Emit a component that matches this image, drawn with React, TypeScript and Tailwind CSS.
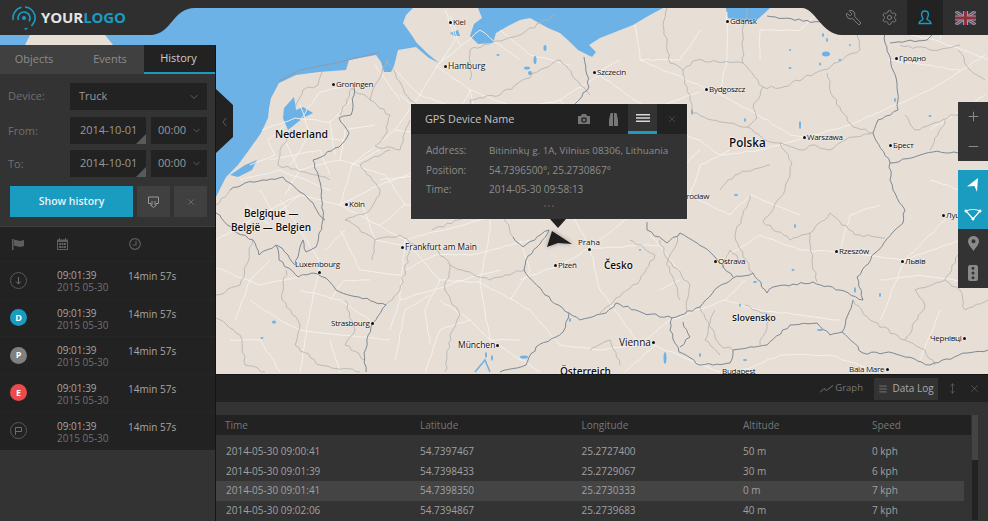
import React from "react";
import { ChevronDown, Wrench, Settings, X, Plus, Minus, Menu, MoveVertical } from "lucide-react";

const rnd = (n: number) => {
  const v = Math.sin(n * 12.9898 + 4.1) * 43758.5453;
  return v - Math.floor(v);
};

function wiggle(d: string, amp: number, step: number, seed: number) {
  const nums = d.match(/-?\d+(\.\d+)?|[ML]/g) ?? [];
  let out = "";
  let px = 0;
  let py = 0;
  let k = seed * 97;
  for (let i = 0; i < nums.length; ) {
    const cmd = nums[i];
    const x = Number(nums[i + 1]);
    const y = Number(nums[i + 2]);
    i += 3;
    if (cmd === "M") {
      out += `M${x} ${y}`;
    } else {
      const len = Math.hypot(x - px, y - py);
      const n = Math.max(1, Math.floor(len / step));
      for (let j = 1; j <= n; j++) {
        const t = j / n;
        const off = j === n ? 0 : (rnd(k++) - 0.5) * amp * 2;
        const nx = (-(y - py) / (len || 1)) * off;
        const ny = ((x - px) / (len || 1)) * off;
        out += `L${(px + (x - px) * t + nx).toFixed(1)} ${(py + (y - py) * t + ny).toFixed(1)}`;
      }
    }
    px = x;
    py = y;
  }
  return out;
}

const borders = [
  "M667 8 L664 30 L667 43 L670 63 L683 70 L690 100 L693 113 L720 122 L747 127 L765 140 L780 143 L792 163 L785 190",
  "M697 60 L683 70 M697 60 L743 63 L763 87 L780 88 L823 70 L860 50 L857 33",
  "M763 87 L753 107 L757 118 L747 127",
  "M827 73 L833 97 L853 127 L873 133",
  "M747 8 L743 35 L743 63",
  "M780 143 L800 150 L815 145 L830 150 L845 140 L873 133",
  "M785 190 L763 222 L790 240 L810 233 L830 213 L855 235 L885 238",
  "M810 233 L812 260 L817 282",
  "M750 195 L735 235 L743 257 L753 273",
  "M387 60 L375 85 L370 100 L352 88",
  "M322 72 L318 85 L303 90 L295 108",
  "M352 88 L340 115",
  "M292 130 L280 150 L278 165 L305 172 L330 180",
  "M387 60 L410 100 L450 130 L470 125 L495 150 L523 160",
  "M470 125 L470 100 L500 95 L540 70 L560 60 L580 85 L590 95",
  "M555 15 L520 35 L470 50 L470 80",
  "M370 100 L390 115 L385 135 L375 146 L400 150 L410 120",
  "M390 150 L360 165 L380 190 L370 210 L345 220 L375 240 L372 260",
  "M375 240 L400 235 L420 250 L432 245 L450 265 L445 290 L460 315 L450 335 L445 372",
  "M432 230 L470 215 L500 210 L513 237",
  "M450 265 L490 280 L525 270",
  "M410 250 L400 290 L386 305",
  "M345 300 L355 330 L345 345 L365 360",
  "M286 270 L282 300 L300 325 L295 345 L320 365 L360 372",
  "M216 318 L240 335 L245 365 L265 372",
  "M253 240 L240 285 L216 295",
  "M230 190 L216 205",
  "M660 240 L680 300 M680 233 L668 260 L690 285 L685 315",
  "M600 313 L640 280 L655 255 L630 240",
  "M742 262 L730 250 L722 268 M700 307 L720 345 L733 350",
  "M715 310 L705 340 L720 355",
  "M760 345 L770 315 L745 305",
  "M853 300 L870 320 L905 340 L925 350 L935 365",
  "M905 115 L915 130 L955 115 L988 120 M930 150 L945 120",
  "M905 340 L925 305 L915 290 L945 280 L958 255",
  "M945 280 L960 290 L965 310 L988 300",
  "M958 50 L970 70 L985 80 M900 45 L930 50 L960 45",
  "M590 350 L610 340 L620 365",
  "M720 190 L735 175 L770 165",
];
const strong = [
  "M354 87 L351 115 L339 118 L349 133 L339 147 L313 160 L321 187 L323 220 L316 247 L306 252 L303 240 L295 265 L288 255 L282 248 L276 245 L279 260 L298 277 L312 273 L326 278 L336 290 L359 297 L386 305 L373 323 L364 353 L366 372",
  "M230 190 L245 183 L263 180 L283 177 L300 192 L307 197 L325 220",
  "M216 213 L233 230 L253 240 L259 255 L276 245",
  "M513 237 L523 247 L549 230 L540 244 L526 260 L524 270 L545 295 L569 313 L563 332 L536 347 L526 365 L500 372",
  "M569 313 L580 320 L606 313 L616 303 L643 313 L672 318 L700 307 L718 287 L733 278 L753 273 L767 293 L773 287 L813 282 L840 290 L863 300",
  "M647 222 L647 230 L667 243 L680 233 L697 243 L713 255 L733 277",
  "M672 318 L670 330 L679 352 L700 365 L730 363 L733 350 L767 345 L790 325 L817 323 L830 335 L842 332 L853 300",
  "M842 332 L863 353 L893 353 L930 365 L967 353 L988 350",
  "M863 300 L857 277 L875 253 L893 232 L903 223 L905 210 L893 190 L890 180 L890 163 L920 155 L933 152 L958 153",
  "M890 163 L873 133 L878 120 L898 110 L897 83 L885 43 L885 33 M890 43 L927 40 L932 35",
  "M767 16 L823 23",
  "M584 57 L589 87 L579 100 L575 104",
  "M683 322 L690 337 L680 347",
];
const roads = [
  "M262 130 L295 118 L330 122 L352 100 M285 140 L298 170 L340 160 L385 175 M270 160 L320 150 M240 180 L280 170 L330 190",
  "M300 120 L320 92 L350 85 M300 105 L310 135 L290 165 M330 122 L335 155 M216 240 L260 215 L300 195 L340 205 L405 240",
  "M340 205 L372 188 L420 170 L450 180 M280 200 L300 230 L320 262 L310 310 L300 372 M216 268 L260 285 L305 275",
  "M437 66 L420 95 L395 130 L352 165 L340 205 M437 66 L480 30 M437 66 L470 90 L520 110 L545 140 M437 66 L455 40 L445 10",
  "M405 240 L400 300 L390 330 M405 240 L480 220 L510 208 L560 205 M405 240 L440 280 L480 282 L490 340 M400 300 L480 275 L500 270",
  "M480 282 L530 310 L560 345 M380 180 L470 170 L520 200 M470 90 L490 180 L490 230 L480 282 M395 360 L405 310 L430 295",
  "M425 372 L440 330 L470 320 L490 340 L540 372 M360 200 L375 240 L420 250 M340 230 L360 270 L400 275 M430 120 L400 95",
  "M510 112 L560 100 L600 75 M560 100 L585 125 L610 110 M597 72 L620 60 M635 25 L640 60 L710 90",
  "M600 75 L650 110 L700 92 M712 90 L750 110 L790 135 L808 137 M808 137 L850 125 L930 90 L985 55",
  "M670 130 L700 140 L720 155 L760 150 L808 137 M727 12 L727 60 L720 90 M760 30 L800 30 L820 10 M760 30 L760 60",
  "M590 248 L660 245 M590 248 L625 220 L660 200 L690 195 L730 215 L750 195 L800 215 M690 195 L700 165 L730 150",
  "M720 260 L760 235 L800 250 L840 252 L905 260 L960 240 M840 252 L850 215 L880 205 M905 260 L950 215 M905 260 L880 320",
  "M590 248 L600 290 L640 345 M590 248 L560 265 L520 280 M640 345 L670 320 L725 300 L760 310 L800 315 L840 320 M725 300 L745 280",
  "M655 345 L690 360 L720 372 M655 345 L625 372 M740 372 L780 355 L830 355 M830 355 L880 372 M930 180 L960 190 L988 170",
  "M890 30 L935 40 L988 60 M888 60 L960 70 M945 15 L940 40 M930 130 L985 95 M880 280 L920 275 L988 285 M940 310 L920 360",
  "M590 248 L575 220 L530 200 L510 205 M650 235 L680 270 M660 290 L680 280 M300 330 L340 335 L390 340 M260 340 L280 372",
  "M250 165 L275 155 L268 140 L285 125 M310 135 L345 140 M320 150 L330 175 M300 170 L285 195 M260 190 L275 215 L300 195 M245 205 L270 225",
  "M340 160 L345 130 L375 125 M352 165 L380 150 M385 175 L405 205 L380 225 M405 205 L450 200 L490 180 M345 230 L325 250 M330 300 L345 280 L370 280",
  "M420 95 L460 110 L470 90 M395 130 L440 135 L470 170 M440 135 L490 120 M400 100 L375 65 M395 70 L420 95 M450 130 L430 170",
  "M405 270 L435 255 L470 255 L530 240 M440 280 L425 310 L430 345 M490 340 L520 340 M470 320 L440 300 M510 300 L530 270 L520 240",
  "M300 290 L340 300 L370 320 M250 300 L280 320 L300 330 M230 340 L260 340 M270 260 L250 280 L235 320 M330 340 L340 372",
  "M500 30 L530 55 L570 65 M480 30 L520 60 M450 15 L460 45 M700 30 L680 60 L640 60 M700 150 L680 170 M560 345 L600 350 L640 345",
];
const lakes: [number, number, number, number][] = [
  [826, 54, 4, 2.5], [823, 35, 1, 2], [827, 40, 1, 2], [840, 60, 1.5, 1], [820, 64, 1, 1.5], [850, 45, 1, 1], [790, 50, 1, 1], [790, 68, 1.5, 1],
  [692, 112, 1, 3], [745, 120, 1, 2], [800, 125, 1, 4], [535, 60, 1.5, 4], [527, 68, 3, 1.5], [530, 73, 2, 2], [545, 48, 1.5, 3], [498, 55, 1.5, 1],
  [274, 322, 2, 1.5], [262, 338, 1.5, 1], [524, 357, 4, 1.5], [486, 355, 1, 3], [492, 358, 1, 3], [610, 145, 1, 2], [680, 215, 1.5, 1], [855, 290, 1, 3],
  [665, 358, 1.5, 6], [793, 270, 1.5, 1], [755, 282, 2, 1], [795, 226, 1, 2], [736, 195, 2, 1], [740, 305, 1, 1.5], [820, 330, 3, 1], [880, 295, 1, 2],
  [700, 355, 1, 2], [895, 100, 1, 2], [930, 116, 1.5, 1], [745, 360, 2, 1], [570, 320, 1, 2], [640, 250, 1, 1],
];

const small = "text-[8px] font-medium tracking-[-0.25px]";
type Label = { t: string; x: number; y: number; c: string; dot?: [number, number] };
const labels: Label[] = [
  { t: "Kiel", x: 453, y: 22, c: small, dot: [450, 22] },
  { t: "Hamburg", x: 448, y: 66, c: "text-[8.5px] font-medium", dot: [445, 66] },
  { t: "Szczecin", x: 597, y: 72, c: small, dot: [594, 72] },
  { t: "Gdańsk", x: 730, y: 21, c: small, dot: [727, 21] },
  { t: "Groningen", x: 336, y: 84, c: small, dot: [333, 84] },
  { t: "Bydgoszcz", x: 709, y: 89, c: small, dot: [706, 89] },
  { t: "Гродно", x: 899, y: 58, c: small, dot: [896, 58] },
  { t: "Warszawa", x: 807, y: 137, c: small, dot: [804, 137] },
  { t: "Брест", x: 893, y: 145, c: small, dot: [890, 145] },
  { t: "Köln", x: 349, y: 204, c: small, dot: [346, 204] },
  { t: "Frankfurt am Main", x: 405, y: 247, c: "text-[8.3px] font-medium", dot: [402, 247] },
  { t: "Luxembourg", x: 295, y: 264, c: small, dot: [319, 272] },
  { t: "Strasbourg", x: 331, y: 323, c: small, dot: [372, 323] },
  { t: "München", x: 458, y: 345, c: "text-[8.5px]", dot: [497, 345] },
  { t: "Praha", x: 578, y: 242, c: "text-[8px] font-medium", dot: [589, 249] },
  { t: "Plzeň", x: 558, y: 265, c: small, dot: [555, 265] },
  { t: "Ostrava", x: 718, y: 261, c: small, dot: [715, 261] },
  { t: "Rzeszów", x: 839, y: 251, c: small, dot: [836, 251] },
  { t: "Львів", x: 905, y: 261, c: small, dot: [902, 261] },
  { t: "Чернівці", x: 930, y: 338, c: small, dot: [964, 338] },
  { t: "Baia Mare", x: 849, y: 369, c: small, dot: [887, 369] },
  { t: "Budapest", x: 722, y: 371, c: small },
  { t: "Wrocław", x: 679, y: 196, c: small },
  { t: "Луцьк", x: 946, y: 215, c: small, dot: [943, 215] },
  { t: "Nederland", x: 275, y: 134, c: "text-[10.4px] font-semibold" },
  { t: "Polska", x: 729, y: 143, c: "text-[11.7px] font-semibold" },
  { t: "Česko", x: 604, y: 265, c: "text-[10px] font-semibold" },
  { t: "Slovensko", x: 732, y: 317, c: "text-[9px] font-semibold" },
  { t: "Vienna", x: 619, y: 342, c: "text-[10px] font-medium", dot: [653, 342] },
  { t: "Österreich", x: 560, y: 371, c: "text-[10px] font-semibold" },
  { t: "Belgique —", x: 244, y: 213, c: "text-[10px] font-semibold" },
  { t: "België — Belgien", x: 231, y: 227, c: "text-[10px] font-semibold" },
];

function MapCanvas() {
  return (
    <div className="absolute inset-0 bg-[#e7ded6]">
      <svg viewBox="0 0 988 521" className="absolute inset-0 h-full w-full" fill="none">
        <path
          fill="#6db2e6"
          d="M0 0V45H25L30 35H105L113 45V197H216L226 177L238 165L249 150L261 133L268 118L269 108L271 98L279 83L296 75L319 72L346 70L349 60L376 55L381 62L384 72L391 72L394 66L398 50L416 47L429 58L439 63L428 54L416 42L413 37L403 23L406 15L413 8V0Z"
        />
        <path
          fill="#6db2e6"
          d="M478 0V8L482 18L474 24L470 36L478 44L493 43L496 33L508 26L520 20L530 18L548 28L560 33L570 42L578 50L592 57L596 52L589 45L600 38L633 25L650 15L663 8V0Z"
        />
        <path fill="#6db2e6" d="M724 0L728 18L747 22L757 20L770 8V0Z" />
        <path fill="#6db2e6" d="M284 108L294 97L296 110L303 107L313 113L303 118L288 130L283 118Z" />
        <path fill="#6db2e6" d="M230 175L245 165L257 160L252 170L238 177Z" />
        <path fill="#6db2e6" d="M450 33L458 30L460 36L454 36Z" />
        <path stroke="#8f9aa6" strokeWidth="1" d="M279 81L300 70L340 62L380 52" />
        {roads.map((d, i) => (
          <path key={i} d={wiggle(d, 0.8, 6, i)} stroke="#f6f3ef" strokeWidth="0.9" strokeLinejoin="round" />
        ))}
        {lakes.map(([cx, cy, rx, ry], i) => (
          <ellipse key={i} cx={cx} cy={cy} rx={rx} ry={ry} fill="#6db2e6" />
        ))}
        <path d="M475 372L485 360L490 372" stroke="#6db2e6" strokeWidth="1.5" />
        {borders.map((d, i) => (
          <path key={i} d={wiggle(d, 1.6, 4, i + 50)} stroke="#b0b2b1" strokeWidth="0.8" strokeLinejoin="round" />
        ))}
        {strong.map((d, i) => (
          <path key={i} d={wiggle(d, 1.2, 4, i + 100)} stroke="#7c8995" strokeWidth="1" strokeLinejoin="round" />
        ))}
      </svg>
      {labels.map((l) => (
        <React.Fragment key={l.t}>
          <span
            className={`absolute -translate-y-1/2 whitespace-nowrap leading-none text-[#0d0d0d] [text-shadow:0_0_2px_#fff,0_0_2px_#fff] ${l.c}`}
            style={{ left: l.x, top: l.y }}
          >
            {l.t}
          </span>
          {l.dot && (
            <span
              className="absolute h-[3px] w-[3px] rounded-full bg-[#111] shadow-[0_0_2px_#fff]"
              style={{ left: l.dot[0] - 1.5, top: l.dot[1] - 1.5 }}
            />
          )}
        </React.Fragment>
      ))}
    </div>
  );
}

function Logo() {
  return (
    <div className="flex items-center gap-[5px] pl-[12px]">
      <svg width="24" height="24" viewBox="0 0 24 24" fill="none" stroke="#1a9bc0" strokeWidth="1.6">
        <circle cx="12" cy="12" r="2" fill="#1a9bc0" stroke="none" />
        <path d="M6.300 14A6 6 0 0 1 12 6A6 6 0 0 1 17 15.300" />
        <path d="M1.200 14A11 11 0 0 1 9.500 1.300" />
        <path d="M13 1A11 11 0 0 1 22.500 15.500L19.500 20" />
        <path d="M15.500 22.500L12.500 23" />
      </svg>
      <span className="text-[15px] font-bold leading-none tracking-[-0.1px] text-[#e4e4e4]">
        YOUR<span className="text-[#1a9bc0]">LOGO</span>
      </span>
    </div>
  );
}

function UkFlag() {
  return (
    <svg width="21" height="14" viewBox="0 0 21 14" className="opacity-80">
      <rect width="21" height="14" fill="#34406a" />
      <path d="M0 0L21 14M21 0L0 14" stroke="#b8b8c0" strokeWidth="3" />
      <path d="M0 0L21 14M21 0L0 14" stroke="#a03040" strokeWidth="1" />
      <path d="M10.500 0V14M0 7H21" stroke="#b8b8c0" strokeWidth="5" />
      <path d="M10.500 0V14M0 7H21" stroke="#a8323f" strokeWidth="3" />
    </svg>
  );
}

function Header() {
  return (
    <header className="absolute left-0 right-0 top-0 z-20 flex h-[35px] items-center justify-between">
      <svg viewBox="0 0 988 35" className="absolute inset-0 h-full w-full">
        <path fill="#2f2f2f" d="M0 0H988V35H842C822 35 815 8 802 8H195C172 8 172 35 150 35H0Z" />
      </svg>
      <div className="relative">
        <Logo />
      </div>
      <nav className="relative flex h-full items-stretch">
        <div className="flex w-[36px] items-center justify-center text-[#858585]">
          <Wrench size={17} strokeWidth={1.3} className="-scale-x-100" />
        </div>
        <div className="flex w-[36px] items-center justify-center text-[#858585]">
          <Settings size={17} strokeWidth={1.3} />
        </div>
        <div className="flex w-[36px] items-center justify-center bg-[#222] text-[#1a9bc0]">
          <svg width="14" height="15" viewBox="0 0 14 15" fill="none" stroke="currentColor" strokeWidth="1.4">
            <path d="M7 1c2.200 0 3.400 1.600 3.400 3.600S9 8.200 9 9.200c0 1 3.800 1.200 4 4.300H1c.2-3.100 4-3.300 4-4.300S3.600 6.600 3.600 4.600 4.800 1 7 1Z" />
          </svg>
        </div>
        <div className="flex w-[45px] items-center justify-center">
          <UkFlag />
        </div>
      </nav>
    </header>
  );
}

function FieldCorner() {
  return <span className="absolute bottom-0 right-0 h-0 w-0 border-b-[10px] border-l-[10px] border-b-[#5a5a5a] border-l-transparent" />;
}

function TimeSelect() {
  return (
    <div className="flex h-[27px] w-[56px] items-center justify-between bg-[#222] pl-[7px] pr-[5px] text-[#999]">
      <span>00:00</span>
      <ChevronDown size={11} strokeWidth={1.2} className="text-[#888]" />
    </div>
  );
}

function DateRow({ label }: { label: string }) {
  return (
    <div className="flex h-[27px] items-center">
      <span className="mt-[2px] w-[70px] pl-[8px] text-[#707070]">{label}</span>
      <div className="relative flex h-full w-[76px] items-center bg-[#222] pl-[10px] text-[#999]">
        2014-10-01
        <FieldCorner />
      </div>
      <div className="ml-[5px]">
        <TimeSelect />
      </div>
    </div>
  );
}

const rows = [
  { kind: "down" },
  { kind: "D", bg: "bg-[#1a9bc0]" },
  { kind: "P", bg: "bg-[#808080]" },
  { kind: "E", bg: "bg-[#ec4a4c]" },
  { kind: "flag" },
];

function RowIcon({ kind, bg }: { kind: string; bg?: string }) {
  if (bg) {
    return (
      <span className={`flex h-[17px] w-[17px] items-center justify-center rounded-full text-[9px] font-bold text-white ${bg}`}>{kind}</span>
    );
  }
  return (
    <span className="flex h-[17px] w-[17px] items-center justify-center rounded-full border border-[#5a5a5a] text-[#6f6f6f]">
      {kind === "down" ? (
        <svg width="9" height="9" viewBox="0 0 9 9" fill="none" stroke="currentColor">
          <path d="M4.500 1V8M2 5.500L4.500 8L7 5.500" />
        </svg>
      ) : (
        <svg width="9" height="9" viewBox="0 0 9 9" fill="none" stroke="currentColor">
          <path d="M1.500 9V1.500H7.500V5.500H1.500" />
        </svg>
      )}
    </span>
  );
}

function Sidebar() {
  return (
    <aside className="relative z-10 mt-[45px] flex w-[216px] shrink-0 flex-col border-r border-[#151515] bg-[#333]">
      <div className="flex h-[29px] bg-[#404040] text-[11px]">
        <div className="flex w-[68px] items-center justify-center text-[#8d8d8d]">Objects</div>
        <div className="flex w-[76px] items-center justify-center pl-[8px] text-[#8d8d8d]">Events</div>
        <div className="flex flex-1 items-center justify-center border-b-2 border-[#1a9bc0] bg-[#222] pr-[2px] text-[#ccc]">History</div>
      </div>
      <div className="flex flex-col gap-[6.5px] pb-[9px] pr-[8px] pt-[9px] text-[11px]">
        <div className="flex h-[27px] items-center">
          <span className="w-[70px] pl-[8px] text-[#707070]">Device:</span>
          <div className="flex h-full flex-1 items-center justify-between bg-[#222] pl-[9px] pr-[7px] text-[#999]">
            Truck
            <ChevronDown size={12} strokeWidth={1.2} className="text-[#888]" />
          </div>
        </div>
        <DateRow label="From:" />
        <DateRow label="To:" />
        <div className="ml-[10px] mt-[2.5px] flex h-[31px] gap-[4px]">
          <div className="flex w-[123px] items-center justify-center bg-[#1a9bc0] text-[10.5px] font-semibold text-[#e6f4f8]">Show history</div>
          <div className="flex w-[33px] items-center justify-center bg-[#404040] text-[#999]">
            <svg width="11" height="12" viewBox="0 0 11 12" fill="none" stroke="currentColor">
              <path d="M3 7.500H.5V1H10.500V7.500H8M4 5V9H2.500L5.500 11.500L8.500 9H7V5" />
            </svg>
          </div>
          <div className="flex flex-1 items-center justify-center bg-[#404040] text-[#888]">
            <X size={10} strokeWidth={1.4} />
          </div>
        </div>
      </div>
      <div className="border-t border-[#3d3d3d] bg-[#222] text-[10px] leading-[12px]">
        <div className="grid h-[35px] grid-cols-[57px_71px_1fr] items-center border-b border-[#262626] text-[#5e5e5e]">
          <svg width="12" height="11" viewBox="0 0 12 11" fill="currentColor" className="ml-[12px]">
            <path d="M0 0H1.500V11H0ZM2 1C4 0 6 2 8 2L12 1V7L8 8C6 8 4 6 2 7Z" />
          </svg>
          <svg width="11" height="12" viewBox="0 0 11 12" fill="currentColor">
            <path d="M0 1.500H2V0H3V1.500H8V0H9V1.500H11V12H0ZM1 4V11H10V4ZM2 5H4V7H2ZM4.500 5H6.500V7H4.500ZM7 5H9V7H7ZM2 8H4V10H2ZM4.500 8H6.500V10H4.500ZM7 8H9V10H7Z" />
          </svg>
          <svg width="12" height="12" viewBox="0 0 12 12" fill="none" stroke="currentColor" strokeWidth="1.2" className="ml-px">
            <circle cx="6" cy="6" r="5.300" />
            <path d="M7 2.800V7H3.500" />
          </svg>
        </div>
        {rows.map((r, i) => (
          <div key={i} className="grid h-[37.5px] grid-cols-[57px_71px_1fr] items-center border-b border-[#262626] last:border-b-0">
            <div className="pl-[10px]">
              <RowIcon kind={r.kind} bg={r.bg} />
            </div>
            <div className="mt-[2px]">
              <div className="text-[#a6a6a6]">09:01:39</div>
              <div className="text-[#717171]">2015 05-30</div>
            </div>
            <div className="mb-[8px] text-[#a6a6a6]">14min 57s</div>
          </div>
        ))}
      </div>
    </aside>
  );
}

function Popup() {
  return (
    <div className="absolute left-[195px] top-[104px] w-[276px] text-[10px] shadow-[0_0_2px_rgba(255,255,255,0.4)]">
      <div className="flex h-[30px] items-stretch bg-[#222]">
        <div className="flex flex-1 items-center pl-[14px] text-[10.8px] text-[#c4c4c4]">GPS Device Name</div>
        <div className="flex w-[28px] items-center justify-center text-[#777]">
          <svg width="12" height="10" viewBox="0 0 12 10" fill="currentColor">
            <path d="M0 2H3L4 0H8L9 2H12V10H0ZM6 3.200A2.800 2.800 0 1 0 6 8.800A2.800 2.800 0 1 0 6 3.200ZM6 4.500A1.500 1.500 0 1 1 6 7.500A1.500 1.500 0 1 1 6 4.500Z" fillRule="evenodd" />
          </svg>
        </div>
        <div className="flex w-[30px] items-center justify-center text-[#777]">
          <svg width="9" height="13" viewBox="0 0 9 13" fill="currentColor">
            <path d="M1.500 0H4V5V13H0V7ZM5 0H7.500L9 7V13H5Z" />
          </svg>
        </div>
        <div className="flex w-[29px] items-center justify-center border-b-[3px] border-[#1a9bc0] bg-[#333] text-[#d8d8d8]">
          <svg width="14" height="8" viewBox="0 0 14 8" fill="currentColor">
            <path d="M0 0H14V1.500H0ZM0 3.200H14V4.700H0ZM0 6.400H14V7.900H0Z" />
          </svg>
        </div>
        <div className="flex w-[30px] items-center justify-center text-[#666]">
          <X size={10} strokeWidth={1.3} />
        </div>
      </div>
      <div className="grid grid-cols-[63px_1fr] gap-y-[6.5px] bg-[#333] pl-[15px] pt-[10px] leading-[13px] text-[#8d8d8d]">
        <span>Address:</span>
        <span className="text-[9.85px]">Bitininkų g. 1A, Vilnius 08306, Lithuania</span>
        <span>Position:</span>
        <span>54.7396500°, 25.2730867°</span>
        <span>Time:</span>
        <span>2014-05-30 09:58:13</span>
      </div>
      <div className="flex h-[23px] justify-center gap-[2px] bg-[#333] pt-[9px]">
        <span className="h-[2px] w-[2px] bg-[#4c4c4c]" />
        <span className="h-[2px] w-[2px] bg-[#4c4c4c]" />
        <span className="h-[2px] w-[2px] bg-[#4c4c4c]" />
      </div>
      <div className="absolute left-[139px] top-full h-0 w-0 border-l-[8px] border-r-[8px] border-t-[9px] border-l-transparent border-r-transparent border-t-[#222]" />
    </div>
  );
}

function Marker() {
  return (
    <svg width="30" height="22" viewBox="0 0 30 22" className="absolute left-[327px] top-[228px] drop-shadow-[0_0_2px_rgba(80,80,80,0.5)]">
      <path d="M9 3L29 16L15 15L4 19Z" fill="#1f1f1f" />
    </svg>
  );
}

function SideBtn({ children, active }: { children: React.ReactNode; active?: boolean }) {
  return (
    <div className={`flex h-[29.5px] items-center justify-center ${active ? "bg-[#1a9bc0] text-white" : "text-[#8a8a8a]"}`}>{children}</div>
  );
}

function Controls() {
  return (
    <div className="absolute right-0 top-[102px] flex w-[30px] flex-col gap-[9px]">
      <div className="bg-[#333]">
        <SideBtn><Plus size={15} strokeWidth={1.6} /></SideBtn>
        <SideBtn><Minus size={15} strokeWidth={1.6} /></SideBtn>
      </div>
      <div className="bg-[#333]">
        <SideBtn active>
          <svg width="12" height="14" viewBox="0 0 12 14" fill="currentColor">
            <path d="M11 0L10 14L7.500 8L0 8.500Z" />
          </svg>
        </SideBtn>
        <SideBtn active>
          <svg width="18" height="13" viewBox="0 0 18 13" fill="currentColor" stroke="currentColor">
            <path d="M2 3C6 1 12 1 16 3L9 11Z" fill="none" strokeWidth="1.200" />
            <circle cx="2" cy="3" r="1.100" /><circle cx="16" cy="3" r="1.100" /><circle cx="9" cy="11" r="1.100" />
          </svg>
        </SideBtn>
        <SideBtn>
          <svg width="11" height="15" viewBox="0 0 11 15" fill="currentColor">
            <path fillRule="evenodd" d="M5.500 0A5.300 5.300 0 0 1 11 5.300C11 8.500 7.500 12 5.500 15C3.500 12 0 8.500 0 5.300A5.300 5.300 0 0 1 5.500 0ZM5.500 3.300A2 2 0 1 0 5.500 7.300A2 2 0 1 0 5.500 3.300Z" />
          </svg>
        </SideBtn>
        <SideBtn>
          <svg width="10" height="16" viewBox="0 0 10 16" fill="currentColor">
            <path fillRule="evenodd" d="M2 0H8A2 2 0 0 1 10 2V14A2 2 0 0 1 8 16H2A2 2 0 0 1 0 14V2A2 2 0 0 1 2 0ZM5 1.800A1.500 1.500 0 1 0 5 4.800A1.500 1.500 0 1 0 5 1.800ZM5 6.500A1.500 1.500 0 1 0 5 9.500A1.500 1.500 0 1 0 5 6.500ZM5 11.200A1.500 1.500 0 1 0 5 14.200A1.500 1.500 0 1 0 5 11.200Z" />
          </svg>
        </SideBtn>
      </div>
    </div>
  );
}

const log = [
  ["2014-05-30 09:00:41", "54.7397467", "25.2727400", "50 m", "0 kph"],
  ["2014-05-30 09:01:39", "54.7398433", "25.2729067", "30 m", "6 kph"],
  ["2014-05-30 09:01:41", "54.7398350", "25.2730333", "0 m", "7 kph"],
  ["2014-05-30 09:02:06", "54.7394867", "25.2739683", "40 m", "7 kph"],
];

function DataPanel() {
  const cols = "grid grid-cols-[204px_161.5px_161.5px_129px_1fr] items-center";
  return (
    <section className="flex h-[147px] shrink-0 flex-col bg-[#333] text-[10px]">
      <div className="flex h-[28px] items-center justify-end border-t border-[#151515] bg-[#222] text-[#777]">
        <div className="flex items-center gap-[2px] pr-[11px]">
          <svg width="13" height="8" viewBox="0 0 13 8" fill="none" stroke="currentColor">
            <path d="M0 7.500L4 3.500L6.500 5.500L13 .5" />
          </svg>
          <span className="text-[9.5px]">Graph</span>
        </div>
        <div className="flex h-[22px] w-[64px] items-center justify-center gap-[4px] bg-[#333] text-[#aaa]">
          <Menu size={10} strokeWidth={1.3} />
          Data Log
        </div>
        <div className="flex w-[28px] justify-center">
          <MoveVertical size={11} strokeWidth={1.2} />
        </div>
        <div className="flex w-[16px] justify-center">
          <X size={11} strokeWidth={1.2} />
        </div>
        <div className="w-[6px]" />
      </div>
      <div className="flex min-h-0 flex-1 pt-[13px]">
        <div className="w-[755px] shrink-0">
          <div className={`${cols} h-[20px] bg-[#222] text-[#777]`}>
            <span className="pl-[9px]">Time</span>
            <span>Latitude</span>
            <span>Longitude</span>
            <span>Altitude</span>
            <span>Speed</span>
          </div>
          <div className="w-[748px] pt-[7px] text-[#a0a0a0]">
            {log.map((r, i) => (
              <div key={i} className={`${cols} h-[19.5px] ${i === 2 ? "bg-[#444]" : ""}`}>
                <span className="pl-[10px]">{r[0]}</span>
                <span>{r[1]}</span>
                <span>{r[2]}</span>
                <span>{r[3]}</span>
                <span>{r[4]}</span>
              </div>
            ))}
          </div>
        </div>
        <div className="ml-[1px] flex h-[105px] w-[6px] flex-col bg-[#222]">
          <div className="h-[45px] bg-[#444]" />
        </div>
      </div>
    </section>
  );
}

export default function App() {
  return (
    <div className="relative h-[521px] w-[988px] overflow-hidden bg-[#333] font-['Open_Sans',sans-serif]">
      <MapCanvas />
      <Header />
      <div className="relative flex h-full">
        <Sidebar />
        <main className="relative flex min-w-0 flex-1 flex-col">
          <div className="relative flex-1">
            <svg width="18" height="64" viewBox="0 0 18 64" className="absolute left-0 top-[89px]">
              <path d="M0 0L17 16V48L0 64Z" fill="#222" />
              <path d="M10 29L7 33L10 37" fill="none" stroke="#5a5a5a" />
            </svg>
            <Popup />
            <Marker />
            <Controls />
          </div>
          <DataPanel />
        </main>
      </div>
    </div>
  );
}
